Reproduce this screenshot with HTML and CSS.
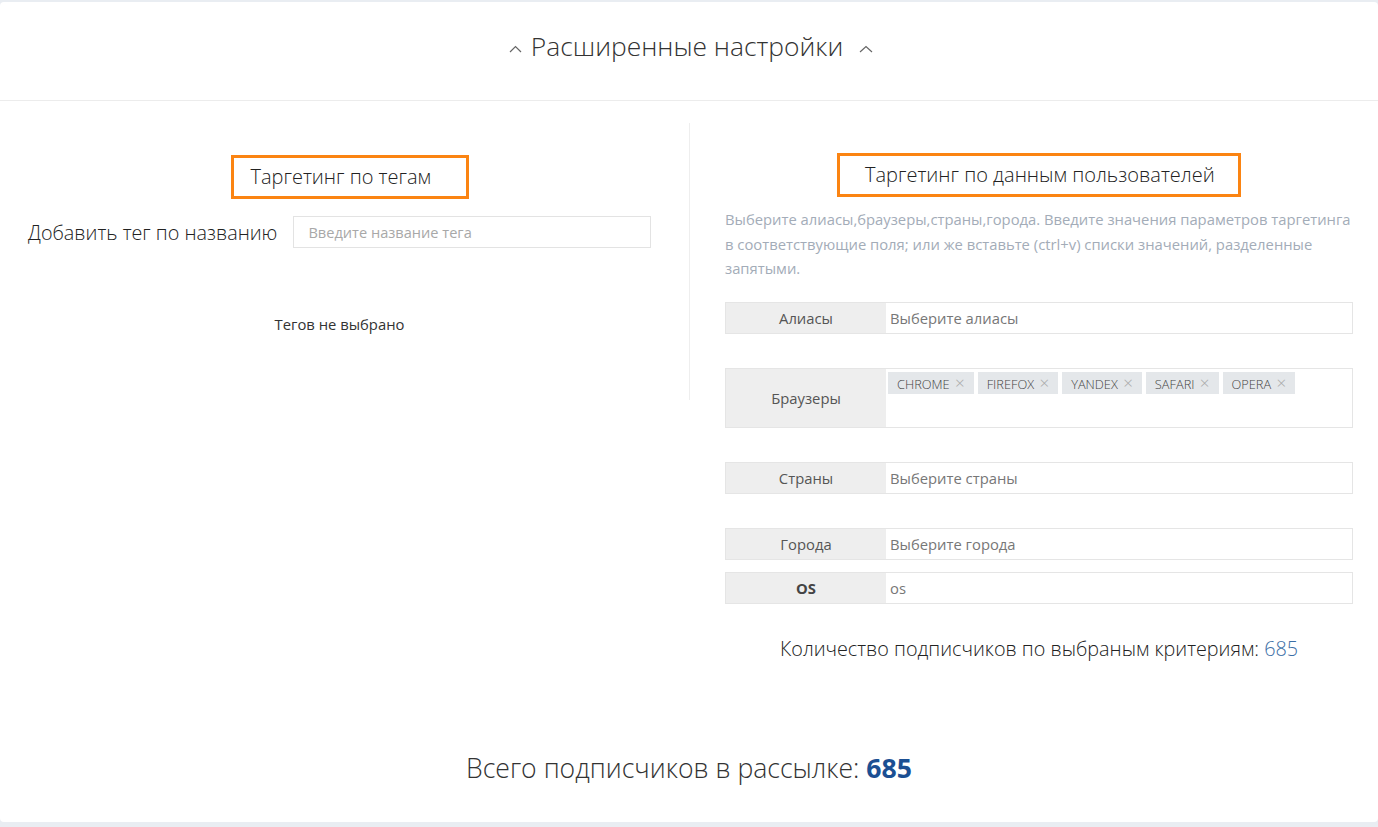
FILE: index.html
```html
<!DOCTYPE html>
<html>
	<head>
		<title>Расширенные настройки</title>
		<link rel="stylesheet" href="styles.css">
	</head>
	<body>
		<div class="card">
			<div class="head">
				<svg class="caret caret-left" width="13" height="8" viewBox="0 0 13 8"><path d="M1 7 L6.5 1.5 L12 7" fill="none" stroke="#666" stroke-width="1.2"/></svg>
				<span class="head-title">Расширенные настройки</span>
				<svg class="caret caret-right" width="14" height="8" viewBox="0 0 14 8"><path d="M1 7 L7 1.5 L13 7" fill="none" stroke="#666" stroke-width="1.2"/></svg>
			</div>
			<div class="cols">
				<div class="col-left">
					<div class="box-wrap"><div class="box box-tags">Таргетинг по тегам</div></div>
					<div class="tag-row">
						<label class="tag-label">Добавить тег по названию</label>
						<input class="tag-input" placeholder="Введите название тега">
					</div>
					<div class="no-tags">Тегов не выбрано</div>
				</div>
				<div class="col-right">
					<div class="box-wrap"><div class="box box-users">Таргетинг по данным пользователей</div></div>
					<p class="hint">Выберите алиасы,браузеры,страны,города. Введите значения параметров таргетинга в соответствующие поля; или же вставьте (ctrl+v) списки значений, разделенные запятыми.</p>

					<div class="field">
						<div class="field-name">Алиасы</div>
						<div class="field-value placeholder">Выберите алиасы</div>
					</div>

					<div class="field field-tall">
						<div class="field-name">Браузеры</div>
						<div class="field-value chips">
							<span class="chip">CHROME <i>×</i></span>
							<span class="chip">FIREFOX <i>×</i></span>
							<span class="chip">YANDEX <i>×</i></span>
							<span class="chip">SAFARI <i>×</i></span>
							<span class="chip">OPERA <i>×</i></span>
						</div>
					</div>

					<div class="field">
						<div class="field-name">Страны</div>
						<div class="field-value placeholder">Выберите страны</div>
					</div>

					<div class="field">
						<div class="field-name">Города</div>
						<div class="field-value placeholder">Выберите города</div>
					</div>

					<div class="field field-close">
						<div class="field-name bold">OS</div>
						<div class="field-value placeholder">os</div>
					</div>

					<div class="count">Количество подписчиков по выбраным критериям: <span>685</span></div>
				</div>
			</div>
			<div class="total">Всего подписчиков в рассылке: <b>685</b></div>
		</div>
	</body>
</html>
```

FILE: styles.css
```css
body {
	margin: 0;
	background: #e9edf2;
	font-family: "Open Sans", "Noto Sans", sans-serif;
	color: #333;
}
.card {
	margin-top: 2px;
	height: 820px;
	background: #fff;
	border-radius: 4px;
	box-sizing: border-box;
}
.head {
	height: 99px;
	box-sizing: border-box;
	padding: 0 0 11px 4px;
	border-bottom: 1px solid #ececec;
	display: flex;
	align-items: center;
	justify-content: center;
}
.head-title {
	font-size: 26.4px;
	font-weight: 300;
	color: #333;
	margin: 0 16px 0 9px;
	line-height: 36px;
}
.caret {
	margin-top: 6px;
}
.cols {
	display: grid;
	grid-template-columns: 690px 1fr;
}
.col-left {
	margin-top: 22px;
	padding-top: 32px;
	height: 245px;
	border-right: 1px solid #eeeeee;
}
.col-right {
	padding: 52px 25px 0 35px;
}
.box-wrap {
	text-align: center;
}
.box {
	display: inline-block;
	box-sizing: border-box;
	height: 44px;
	border: 3px solid #fb8412;
	font-size: 20px;
	font-weight: 300;
	line-height: 24px;
	padding: 7px 0 7px 17px;
	text-align: left;
	color: #222;
}
.box-tags {
	width: 238px;
	margin-left: 10px;
}
.box-users {
	width: 404px;
	padding-left: 25px;
}
.tag-row {
	display: flex;
	align-items: center;
	margin-top: 17px;
	padding-left: 28px;
	gap: 16px;
}
.tag-label {
	font-size: 19.8px;
	font-weight: 300;
	color: #222;
}
.tag-input {
	width: 358px;
	height: 32px;
	box-sizing: border-box;
	border: 1px solid #e3e3e3;
	padding: 0 14px;
	font-family: inherit;
	font-size: 14.6px;
	outline: none;
}
.tag-input::placeholder {
	color: #a8a8a8;
}
.no-tags {
	margin-top: 66px;
	text-align: center;
	font-size: 14.8px;
	line-height: 20px;
	color: #333;
	padding-right: 10px;
}
.hint {
	margin: 10px 0 21px 0;
	font-size: 14.8px;
	line-height: 24.5px;
	color: #a3acb8;
}
.field {
	display: grid;
	grid-template-columns: 160px 1fr;
	height: 32px;
	border: 1px solid #e5e5e5;
	box-sizing: border-box;
	margin-bottom: 34px;
	font-size: 14.8px;
}
.field-close {
	margin-top: -22px;
	margin-bottom: 0;
}
.field-tall {
	height: 60px;
}
.field-name {
	background: #eeeeee;
	display: flex;
	align-items: center;
	justify-content: center;
	color: #555;
}
.field-name.bold {
	font-weight: 700;
	color: #444;
}
.field-value {
	display: flex;
	align-items: center;
	padding-left: 4px;
}
.placeholder {
	color: #777;
}
.chips {
	align-items: flex-start;
	padding-top: 3px;
	padding-left: 2px;
	gap: 4px;
}
.chip {
	background: #e4e7ea;
	height: 22px;
	line-height: 22px;
	padding: 0 9px 0 9px;
	font-size: 12.8px;
	font-weight: 300;
	color: #444;
}
.chip i {
	font-style: normal;
	color: #a9a9a9;
	font-size: 17px;
	margin-left: 2px;
}
.count {
	margin-top: 31px;
	text-align: center;
	font-size: 19.8px;
	line-height: 28px;
	font-weight: 300;
	color: #222;
}
.count span {
	color: #3b6ea5;
}
.total {
	margin-top: 87px;
	text-align: center;
	font-size: 26.6px;
	font-weight: 300;
	line-height: 36px;
	color: #333;
}
.total b {
	font-weight: 700;
	color: #1b4f93;
}
```
